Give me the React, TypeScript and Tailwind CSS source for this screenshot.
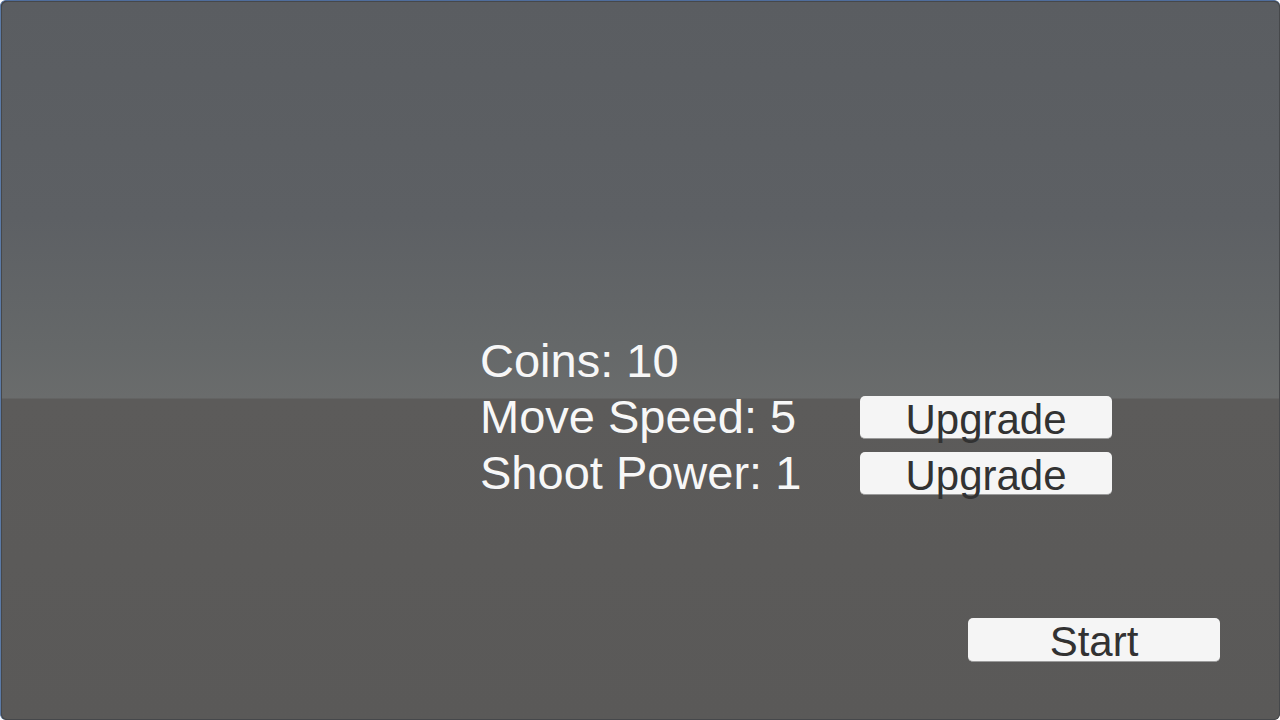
const stats = [
  { label: "Move Speed: 5" },
  { label: "Shoot Power: 1" },
];

function GameButton({ label, height }: { label: string; height: string }) {
  return (
    <button
      className={`w-[252px] ${height} rounded-[5px] bg-[#f5f5f5] border-b border-[#9a9a9a] text-[42px] text-[#323232] pt-[3px] flex justify-center items-start overflow-visible`}
    >
      <span className="leading-[42px]">{label}</span>
    </button>
  );
}

export default function App() {
  return (
    <div
      className="w-full h-[720px] bg-[#3d3f42] border-t border-l border-t-[#4f6d9c] border-l-[#5b7aa6] rounded-[6px] overflow-hidden"
      style={{ fontFamily: '"Liberation Sans", Arial, sans-serif' }}
    >
      <div className="h-full rounded-[6px] border border-[#46484b] bg-[linear-gradient(to_bottom,#5a5d61_0%,#5d6064_30%,#656869_48%,#6a6c6c_55.2%,#5c5b5a_55.4%,#5a5958_100%)] flex flex-col">
        {/* stats and upgrades */}
        <div className="pt-[331px] pl-[478px] grid grid-cols-[380px_252px] auto-rows-[56px] items-center">
          <div className="col-span-2 text-[47px] leading-[56px] text-[#f7f7f7]">Coins: 10</div>
          {stats.map((s) => (
            <div key={s.label} className="contents">
              <div className="text-[47px] leading-[56px] text-[#f7f7f7]">{s.label}</div>
              <GameButton label="Upgrade" height="h-[43px]" />
            </div>
          ))}
        </div>

        <div className="flex-1" />

        <div className="flex justify-end pr-[59px] pb-[57px]">
          <GameButton label="Start" height="h-[44px]" />
        </div>
      </div>
    </div>
  );
}
